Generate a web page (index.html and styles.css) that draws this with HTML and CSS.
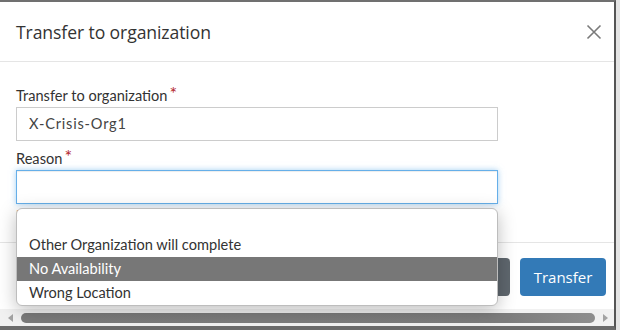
FILE: index.html
```html
<!DOCTYPE html>
<html>
<head>
<meta charset="utf-8">
<link rel="stylesheet" href="styles.css">
</head>
<body>
<div class="frame">
  <div class="modal">
    <div class="modal-header">
      <h4 class="modal-title">Transfer to organization</h4>
      <button class="close" aria-label="Close">
        <svg width="16" height="16" viewBox="0 0 16 16"><path d="M1.5 1.5 L14.5 14.5 M14.5 1.5 L1.5 14.5" stroke="#7a7a7a" stroke-width="1.6" fill="none"/></svg>
      </button>
    </div>
    <div class="modal-body">
      <div class="form-group">
        <label class="label">Transfer to organization<span class="req">*</span></label>
        <div class="input">X-Crisis-Org1</div>
      </div>
      <div class="form-group last">
        <label class="label">Reason<span class="req">*</span></label>
        <div class="input focus"></div>
        <div class="error">Reason is required</div>
      </div>
    </div>
    <div class="modal-footer">
      <button class="btn btn-default">Cancel</button>
      <button class="btn btn-primary">Transfer</button>
    </div>
  </div>
  <div class="scrollbar">
    <span class="arrow left"></span>
    <span class="thumb"></span>
    <span class="arrow right"></span>
  </div>
  <ul class="dropdown">
    <li class="item"></li>
    <li class="item">Other Organization will complete</li>
    <li class="item active">No Availability</li>
    <li class="item">Wrong Location</li>
  </ul>
</div>
</body>
</html>
```

FILE: styles.css
```css
* { box-sizing: border-box; }
html, body { margin: 0; padding: 0; }
body {
  background: #e4e4e4;
  width: 620px;
  height: 330px;
  overflow: hidden;
  font-family: "Lato", "Liberation Sans", sans-serif;
  color: #333;
}
.frame {
  position: relative;
  width: 616px;
  height: 330px;
  background: #fff;
  border-top: 2px solid #707070;
  border-right: 2px solid #555;
  border-bottom: 4px solid #6b6b6b;
  display: flex;
  flex-direction: column;
}
.modal {
  flex: 1;
  display: flex;
  flex-direction: column;
}
.modal-header {
  height: 60px;
  border-bottom: 1px solid #e5e5e5;
  display: flex;
  align-items: center;
  justify-content: space-between;
  padding: 0 12px 0 16px;
}
.modal-title {
  margin: 0;
  font-family: "Open Sans", "Noto Sans", sans-serif;
  font-weight: 400;
  font-size: 17.6px;
  color: #333;
  letter-spacing: -0.1px;
}
.close {
  border: 0;
  background: none;
  padding: 0;
  width: 16px;
  height: 16px;
  display: flex;
}
.modal-body {
  padding: 24px 16px 0 16px;
  height: 180px;
}
.form-group { margin-bottom: 8px; }
.form-group.last { margin-bottom: 0; }
.label {
  display: block;
  font-size: 14.6px;
  line-height: 20px;
  margin-bottom: 1px;
  color: #333;
}
.req {
  color: #b3262a;
  font-size: 18px;
  line-height: 0;
  position: relative;
  top: -1px;
  margin-left: 2px;
}
.input {
  width: 482px;
  height: 34px;
  border: 1px solid #ccc;
  padding: 0 12px;
  font-size: 14.6px;
  letter-spacing: 0.8px;
  line-height: 32px;
  color: #444;
  background: #fff;
}
.input.focus {
  border-color: #66afe9;
  box-shadow: inset 0 1px 1px rgba(0,0,0,.075), 0 0 6px rgba(102,175,233,.6);
}
.error {
  font-size: 13px;
  line-height: 18px;
  color: #d9532c;
  margin-top: 2px;
}
.modal-footer {
  border-top: 1px solid #e5e5e5;
  padding: 15px 8px 0 0;
  display: flex;
  justify-content: flex-end;
  gap: 10px;
  flex: 1;
}
.btn {
  height: 38px;
  border: 0;
  border-radius: 4px;
  font-family: "Open Sans", "Noto Sans", sans-serif;
  font-size: 15px;
  line-height: 36px;
  color: #fff;
  padding: 0 13px;
}
.btn-default {
  background: #5f676e;
  width: 74px;
}
.btn-primary {
  background: #337ab7;
  width: 86px;
}
.scrollbar {
  height: 17px;
  background: #f1f1f1;
  display: flex;
  align-items: center;
  padding: 0 6px 0 8px;
  gap: 8px;
}
.arrow {
  width: 0;
  height: 0;
  border-top: 4px solid transparent;
  border-bottom: 4px solid transparent;
}
.arrow.left { border-right: 5px solid #a3a3a3; }
.arrow.right { border-left: 5px solid #a3a3a3; }
.thumb {
  flex: 1;
  height: 10px;
  border-radius: 5px;
  background: linear-gradient(to right, #7b7b7b 0%, #7d7d7d 85%, #8e8e8e 100%);
}
.dropdown {
  position: absolute;
  left: 16px;
  top: 206px;
  width: 482px;
  margin: 0;
  padding: 0;
  list-style: none;
  background: #fff;
  border: 1px solid #bdbdbd;
  border-radius: 6px;
  box-shadow: 0 4px 18px rgba(0,0,0,.26);
  overflow: hidden;
}
.item {
  height: 24px;
  line-height: 24px;
  padding: 0 12px;
  font-size: 14.6px;
  color: #333;
}
.item.active {
  background: #777;
  color: #fff;
}
```
